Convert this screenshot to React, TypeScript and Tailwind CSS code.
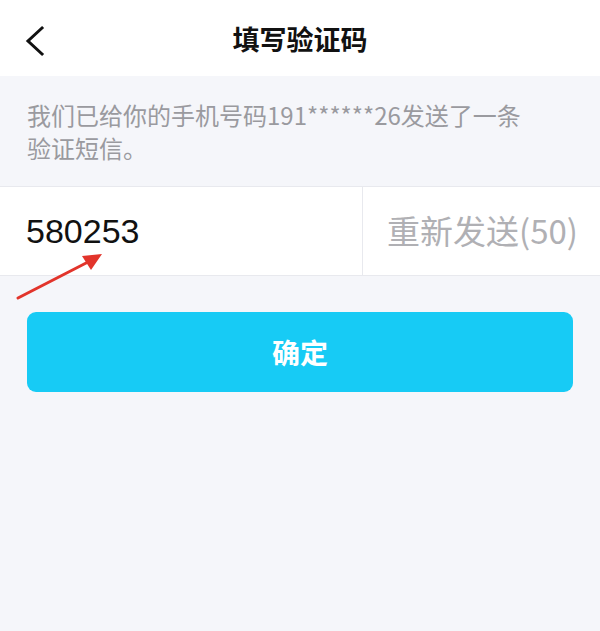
import React from 'react';

const font = { fontFamily: '"Noto Sans CJK SC", "Liberation Sans", sans-serif' };

export default function App() {
  return (
    <div className="relative w-[600px] h-[631px] bg-[#f5f6fa] overflow-hidden" style={font}>
      {/* Header */}
      <div className="relative h-[76px] bg-white flex items-center justify-center">
        <svg className="absolute left-[22px] top-[24px]" width="28" height="34" viewBox="0 0 28 34">
          <path d="M20 4 L6 17 L20 30" fill="none" stroke="#111" strokeWidth="3" strokeLinecap="square" />
        </svg>
        <h1 className="text-[27px] font-bold text-[#111] leading-none">填写验证码</h1>
      </div>

      {/* Hint */}
      <div className="h-[110px] px-[27px] pt-[22px] text-[24px] leading-[33px] text-[#9a9a9f]">
        我们已给你的手机号码191******26发送了一条<br />验证短信。
      </div>

      {/* Code input row */}
      <div className="h-[90px] bg-white border-y border-[#e8e9ee] flex">
        <div className="flex-1 flex items-center pl-[26px] text-[34px] text-[#111]" style={{ fontFamily: '"Liberation Sans", sans-serif' }}>
          580253
        </div>
        <div className="w-[238px] border-l border-[#e8e9ee] flex items-center pl-[24px] text-[33px] text-[#b0b0b4]">
          重新发送(50)
        </div>
      </div>

      {/* Confirm button */}
      <div className="px-[27px] pt-[36px]">
        <button className="w-full h-[80px] rounded-[9px] bg-[#17cbf5] text-white text-[28px] font-bold">
          确定
        </button>
      </div>

      {/* Annotation arrow */}
      <svg className="absolute left-0 top-0" width="600" height="631" viewBox="0 0 600 631">
        <line x1="18" y1="298" x2="90" y2="261" stroke="#e2342b" strokeWidth="3" strokeLinecap="round" />
        <polygon points="102,254 82,256 91,270" fill="#e2342b" />
      </svg>
    </div>
  );
}
